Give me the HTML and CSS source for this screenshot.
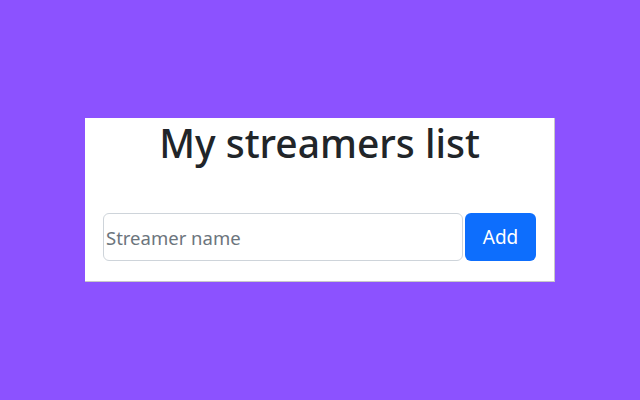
FILE: index.html
```html
<!DOCTYPE html>
<html>
<head>
<meta charset="utf-8">
<link rel="stylesheet" href="styles.css">
</head>
<body>
<div class="stage">
  <div class="card">
    <h1 class="title">My streamers list</h1>
    <div class="form">
      <input class="field" type="text" placeholder="Streamer name">
      <button class="btn">Add</button>
    </div>
  </div>
</div>
</body>
</html>
```
FILE: styles.css
```css
html, body {
  margin: 0;
  padding: 0;
  width: 640px;
  height: 400px;
  background: #8c52ff;
  font-family: "Noto Sans", "Open Sans", sans-serif;
}
.stage {
  width: 640px;
  height: 400px;
  padding: 118px 0 0 85px;
  box-sizing: border-box;
}
.card {
  width: 470px;
  height: 164px;
  box-sizing: border-box;
  background: #fff;
  border-right: 1px solid #c8c8c8;
  border-bottom: 1px solid #c8c8c8;
  padding: 0 18px 0 18px;
  display: flex;
  flex-direction: column;
  align-items: stretch;
}
.title {
  margin: 0;
  text-align: center;
  font-size: 39px;
  font-weight: 500;
  line-height: 50px;
  color: #212529;
}
.form {
  margin-top: 45px;
  display: flex;
  gap: 2px;
}
.field {
  width: 360px;
  height: 48px;
  box-sizing: border-box;
  border: 1px solid #ced4da;
  border-radius: 6px;
  padding: 0 2px;
  font-family: inherit;
  font-size: 18.5px;
  color: #212529;
  outline: none;
}
.field::placeholder {
  color: #6c757d;
}
.btn {
  width: 71px;
  height: 48px;
  border: none;
  border-radius: 6px;
  background: #0d6efd;
  color: #fff;
  font-family: inherit;
  font-size: 19px;
  padding: 0;
}
```
